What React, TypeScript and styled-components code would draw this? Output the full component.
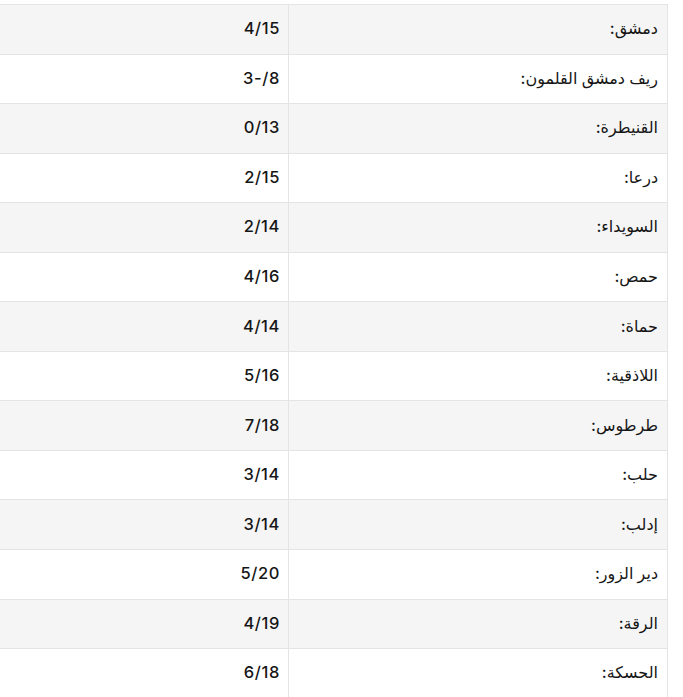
import React from 'react';
import styled, { createGlobalStyle } from 'styled-components';

const GlobalStyle = createGlobalStyle`
    html, body {
        margin: 0;
        padding: 0;
        background: #ffffff;
    }
    body {
        font-family: Inter, "Noto Sans", "DejaVu Sans", sans-serif;
        color: #161616;
    }
`;

const Page = styled.div`
    direction: rtl;
    padding: 4px 15px 0 0;
    overflow: hidden;
`;

const Table = styled.table`
    width: 679px;
    border-collapse: collapse;
    table-layout: fixed;
    font-size: 16px;
    line-height: 24px;
`;

const Row = styled.tr<{ $striped: boolean }>`
    height: 49.55px;
    background: ${(p) => (p.$striped ? '#f5f5f5' : '#ffffff')};
`;

const Cell = styled.td<{ $numeric?: boolean }>`
    box-sizing: border-box;
    padding: 0 ${(p) => (p.$numeric ? '8px' : '9px')} 2px 9px;
    border: 1px solid #e4e4e4;
    text-align: right;
    vertical-align: middle;
    white-space: nowrap;
    font-weight: 500;
    font-size: ${(p) => (p.$numeric ? '16.5px' : '16px')};
    letter-spacing: ${(p) => (p.$numeric ? '0.6px' : 'normal')};
`;

const rows: [string, string][] = [
    ['دمشق:', '4/15'],
    ['ريف دمشق القلمون:', '8/-3'],
    ['القنيطرة:', '0/13'],
    ['درعا:', '2/15'],
    ['السويداء:', '2/14'],
    ['حمص:', '4/16'],
    ['حماة:', '4/14'],
    ['اللاذقية:', '5/16'],
    ['طرطوس:', '7/18'],
    ['حلب:', '3/14'],
    ['إدلب:', '3/14'],
    ['دير الزور:', '5/20'],
    ['الرقة:', '4/19'],
    ['الحسكة:', '6/18'],
];

export default function App() {
    return (
        <>
            <GlobalStyle />
            <Page>
                <Table>
                    <colgroup>
                        <col style={{ width: 379 }} />
                        <col style={{ width: 300 }} />
                    </colgroup>
                    <tbody>
                        {rows.map(([city, temp], i) => (
                            <Row key={city} $striped={i % 2 === 0}>
                                <Cell>{city}</Cell>
                                <Cell $numeric>{temp}</Cell>
                            </Row>
                        ))}
                    </tbody>
                </Table>
            </Page>
        </>
    );
}
